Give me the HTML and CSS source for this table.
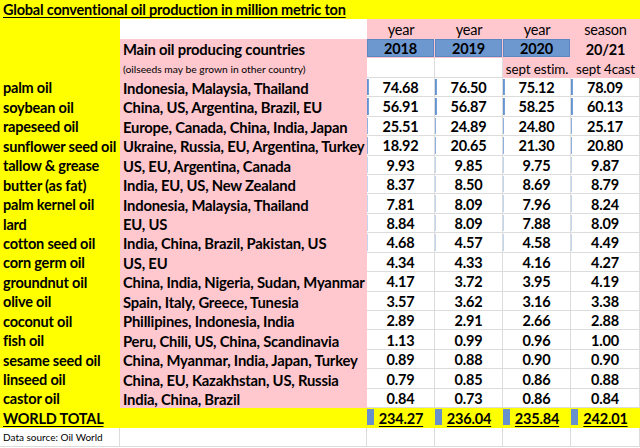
FILE: index.html
```html
<!DOCTYPE html>
<html>
<head>
<meta charset="utf-8">
<link rel="stylesheet" href="styles.css">
</head>
<body>
<div class="sheet">
  <div class="c title yel">Global conventional oil production in million metric ton</div>

  <div class="c yel"></div>
  <div class="c plain"></div>
  <div class="c pink ctr norm">year</div>
  <div class="c pink ctr norm">year</div>
  <div class="c pink ctr norm">year</div>
  <div class="c pink ctr norm">season</div>

  <div class="c yel"></div>
  <div class="c pink txt">Main oil producing countries</div>
  <div class="c bluewrap"><div class="blue">2018</div></div>
  <div class="c bluewrap"><div class="blue">2019</div></div>
  <div class="c bluewrap"><div class="blue">2020</div></div>
  <div class="c pink ctr">20/21</div>

  <div class="c yel"></div>
  <div class="c pink txt note">(oilseeds may be grown in other country)</div>
  <div class="c white"></div>
  <div class="c white"></div>
  <div class="c pink ctr sub">sept estim.</div>
  <div class="c pink ctr sub">sept 4cast</div>

  <div class="c yel name">palm oil</div>
  <div class="c pink txt">Indonesia, Malaysia, Thailand</div>
  <div class="c white num bar-l">74.68</div>
  <div class="c white num bar-l">76.50</div>
  <div class="c white num bar-l">75.12</div>
  <div class="c white num bar-l">78.09</div>

  <div class="c yel name">soybean oil</div>
  <div class="c pink txt">China, US, Argentina, Brazil, EU</div>
  <div class="c white num bar-l">56.91</div>
  <div class="c white num bar-l">56.87</div>
  <div class="c white num bar-l">58.25</div>
  <div class="c white num bar-l">60.13</div>

  <div class="c yel name">rapeseed oil</div>
  <div class="c pink txt">Europe, Canada, China, India, Japan</div>
  <div class="c white num bar-m">25.51</div>
  <div class="c white num bar-m">24.89</div>
  <div class="c white num bar-m">24.80</div>
  <div class="c white num bar-m">25.17</div>

  <div class="c yel name">sunflower seed oil</div>
  <div class="c pink txt">Ukraine, Russia, EU, Argentina, Turkey</div>
  <div class="c white num bar-m">18.92</div>
  <div class="c white num bar-m">20.65</div>
  <div class="c white num bar-m">21.30</div>
  <div class="c white num bar-m">20.80</div>

  <div class="c yel name">tallow &amp; grease</div>
  <div class="c pink txt">US, EU, Argentina, Canada</div>
  <div class="c white num bar-s">9.93</div>
  <div class="c white num bar-s">9.85</div>
  <div class="c white num bar-s">9.75</div>
  <div class="c white num bar-s">9.87</div>

  <div class="c yel name">butter (as fat)</div>
  <div class="c pink txt">India, EU, US, New Zealand</div>
  <div class="c white num bar-s">8.37</div>
  <div class="c white num bar-s">8.50</div>
  <div class="c white num bar-s">8.69</div>
  <div class="c white num bar-s">8.79</div>

  <div class="c yel name">palm kernel oil</div>
  <div class="c pink txt">Indonesia, Malaysia, Thailand</div>
  <div class="c white num bar-s">7.81</div>
  <div class="c white num bar-s">8.09</div>
  <div class="c white num bar-s">7.96</div>
  <div class="c white num bar-s">8.24</div>

  <div class="c yel name">lard</div>
  <div class="c pink txt">EU, US</div>
  <div class="c white num bar-s">8.84</div>
  <div class="c white num bar-s">8.09</div>
  <div class="c white num bar-s">7.88</div>
  <div class="c white num bar-s">8.09</div>

  <div class="c yel name">cotton seed oil</div>
  <div class="c pink txt">India, China, Brazil, Pakistan, US</div>
  <div class="c white num bar-s">4.68</div>
  <div class="c white num bar-s">4.57</div>
  <div class="c white num bar-s">4.58</div>
  <div class="c white num bar-s">4.49</div>

  <div class="c yel name">corn germ oil</div>
  <div class="c pink txt">US, EU</div>
  <div class="c white num">4.34</div>
  <div class="c white num">4.33</div>
  <div class="c white num">4.16</div>
  <div class="c white num">4.27</div>

  <div class="c yel name">groundnut oil</div>
  <div class="c pink txt">China, India, Nigeria, Sudan, Myanmar</div>
  <div class="c white num">4.17</div>
  <div class="c white num">3.72</div>
  <div class="c white num">3.95</div>
  <div class="c white num">4.19</div>

  <div class="c yel name">olive oil</div>
  <div class="c pink txt">Spain, Italy, Greece, Tunesia</div>
  <div class="c white num">3.57</div>
  <div class="c white num">3.62</div>
  <div class="c white num">3.16</div>
  <div class="c white num">3.38</div>

  <div class="c yel name">coconut oil</div>
  <div class="c pink txt">Phillipines, Indonesia, India</div>
  <div class="c white num">2.89</div>
  <div class="c white num">2.91</div>
  <div class="c white num">2.66</div>
  <div class="c white num">2.88</div>

  <div class="c yel name">fish oil</div>
  <div class="c pink txt">Peru, Chili, US, China, Scandinavia</div>
  <div class="c white num">1.13</div>
  <div class="c white num">0.99</div>
  <div class="c white num">0.96</div>
  <div class="c white num">1.00</div>

  <div class="c yel name">sesame seed oil</div>
  <div class="c pink txt">China, Myanmar, India, Japan, Turkey</div>
  <div class="c white num">0.89</div>
  <div class="c white num">0.88</div>
  <div class="c white num">0.90</div>
  <div class="c white num">0.90</div>

  <div class="c yel name">linseed oil</div>
  <div class="c pink txt">China, EU, Kazakhstan, US, Russia</div>
  <div class="c white num">0.79</div>
  <div class="c white num">0.85</div>
  <div class="c white num">0.86</div>
  <div class="c white num">0.88</div>

  <div class="c yel name">castor oil</div>
  <div class="c pink txt">India, China, Brazil</div>
  <div class="c white num">0.84</div>
  <div class="c white num">0.73</div>
  <div class="c white num">0.86</div>
  <div class="c white num">0.84</div>

  <div class="c yel name u">WORLD TOTAL</div>
  <div class="c yel"></div>
  <div class="c yel num u bar-t">234.27</div>
  <div class="c yel num u bar-t">236.04</div>
  <div class="c yel num u bar-t">235.84</div>
  <div class="c yel num u bar-t">242.01</div>

  <div class="c white source">Data source: Oil World</div>
  <div class="c white"></div>
  <div class="c white"></div>
  <div class="c white"></div>
  <div class="c white"></div>
  <div class="c white"></div>
</div>
</body>
</html>
```

FILE: styles.css
```css
html, body {
  margin: 0;
  padding: 0;
  background: #ffffff;
}
body {
  font-family: "Lato", "Liberation Sans", sans-serif;
  color: #000;
}
.sheet {
  width: 640px;
  height: 448px;
  display: grid;
  grid-template-columns: 120px 247px 68px 68px 68px 69px;
  grid-template-rows: repeat(23, 19.45px);
  overflow: hidden;
}
.c {
  box-sizing: border-box;
  display: flex;
  align-items: center;
  padding-top: 1px;
  font-size: 14.5px;
  font-weight: 700;
  white-space: nowrap;
  overflow: visible;
  letter-spacing: -0.2px;
}
.title {
  grid-column: 1 / 7;
  padding-left: 3px;
  padding-top: 0;
  text-decoration: underline;
  text-underline-offset: 2px;
}
.yel { background: #ffff00; }
.pink { background: #ffc7ce; }
.plain { background: #ffffff; }
.white {
  background-color: #ffffff;
  border-right: 1px solid #dcdcdc;
  border-bottom: 1px solid #dcdcdc;
}
.name { padding-left: 3px; }
.txt { padding-left: 3px; font-size: 14.8px; }
.ctr { justify-content: center; }
.norm { font-weight: 400; }
.sub { font-weight: 400; font-size: 13.4px; letter-spacing: -0.1px; }
.note { font-weight: 400; font-size: 10.3px; letter-spacing: 0; }
.source { font-weight: 400; font-size: 10px; padding-left: 3px; letter-spacing: 0; }
.num { justify-content: center; }
.u {
  text-decoration: underline;
  text-underline-offset: 2px;
}
.bluewrap {
  background: #ffc7ce;
  padding: 0 1px 1px 0;
}
.blue {
  width: 100%;
  height: 100%;
  box-sizing: border-box;
  background: #6c97cf;
  border: 1px solid #5b86c1;
  display: flex;
  align-items: center;
  justify-content: center;
}
.bar-l, .bar-m, .bar-s, .bar-t {
  background-repeat: no-repeat;
}
.bar-l {
  background-image: linear-gradient(to right, #5b8bd0, #7ea6dc);
  background-size: 2px calc(100% - 2px);
  background-position: 0 1px;
}
.bar-m {
  background-image: linear-gradient(#8fb1e0, #8fb1e0);
  background-size: 1px calc(100% - 2px);
  background-position: 0 1px;
}
.bar-s {
  background-image: linear-gradient(#c4d5ee, #c4d5ee);
  background-size: 1px calc(100% - 2px);
  background-position: 0 1px;
}
.bar-t {
  background-image: linear-gradient(#6790cc, #6790cc);
  background-size: 7px calc(100% - 4px);
  background-position: 0 1px;
}
```
